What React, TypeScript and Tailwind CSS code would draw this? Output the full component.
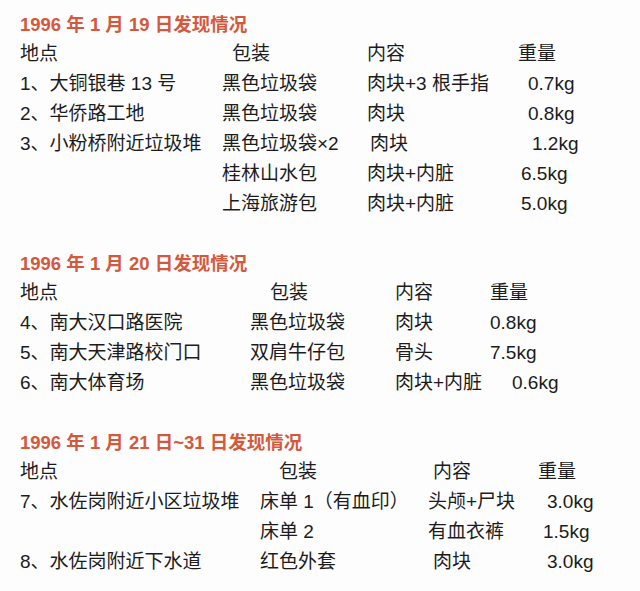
const font = { fontFamily: '"Liberation Sans", "Noto Sans CJK SC", sans-serif' };

function Title({ children }: { children: React.ReactNode }) {
  return (
    <h2 className="h-[28px] leading-[28px] text-[18.5px] font-bold text-[#d4593c]">{children}</h2>
  );
}

export default function App() {
  return (
    <div
      className="w-[640px] h-[591px] overflow-hidden bg-[#fdfdfe] pl-[20px] pt-[11px] text-[19px] leading-[30px] text-[#1c1c1c]"
      style={font}
    >
      {/* 1月19日 */}
      <section>
        <Title>1996 年 1 月 19 日发现情况</Title>
        <div className="grid grid-cols-[202px_145px_151px_1fr] whitespace-nowrap">
          <div>地点</div>
          <div className="pl-[10px]">包装</div>
          <div>内容</div>
          <div>重量</div>

          <div>1、大铜银巷 13 号</div>
          <div>黑色垃圾袋</div>
          <div>肉块+3 根手指</div>
          <div className="pl-[10px]">0.7kg</div>

          <div>2、华侨路工地</div>
          <div>黑色垃圾袋</div>
          <div>肉块</div>
          <div className="pl-[10px]">0.8kg</div>

          <div>3、小粉桥附近垃圾堆</div>
          <div>黑色垃圾袋×2</div>
          <div className="pl-[3px]">肉块</div>
          <div className="pl-[14px]">1.2kg</div>

          <div></div>
          <div>桂林山水包</div>
          <div>肉块+内脏</div>
          <div className="pl-[3px]">6.5kg</div>

          <div></div>
          <div>上海旅游包</div>
          <div>肉块+内脏</div>
          <div className="pl-[3px]">5.0kg</div>
        </div>
      </section>

      {/* 1月20日 */}
      <section className="mt-[31px]">
        <Title>1996 年 1 月 20 日发现情况</Title>
        <div className="grid grid-cols-[230px_145px_95px_1fr] whitespace-nowrap">
          <div>地点</div>
          <div className="pl-[20px]">包装</div>
          <div>内容</div>
          <div>重量</div>

          <div>4、南大汉口路医院</div>
          <div>黑色垃圾袋</div>
          <div>肉块</div>
          <div>0.8kg</div>

          <div>5、南大天津路校门口</div>
          <div>双肩牛仔包</div>
          <div>骨头</div>
          <div>7.5kg</div>

          <div>6、南大体育场</div>
          <div>黑色垃圾袋</div>
          <div>肉块+内脏</div>
          <div className="pl-[22px]">0.6kg</div>
        </div>
      </section>

      {/* 1月21日~31日 */}
      <section className="mt-[31px]">
        <Title>1996 年 1 月 21 日~31 日发现情况</Title>
        <div className="grid grid-cols-[240px_168px_110px_1fr] whitespace-nowrap">
          <div>地点</div>
          <div className="pl-[19px]">包装</div>
          <div className="pl-[5px]">内容</div>
          <div>重量</div>

          <div>7、水佐岗附近小区垃圾堆</div>
          <div>床单 1（有血印）</div>
          <div>头颅+尸块</div>
          <div className="pl-[9px]">3.0kg</div>

          <div></div>
          <div>床单 2</div>
          <div>有血衣裤</div>
          <div className="pl-[5px]">1.5kg</div>

          <div>8、水佐岗附近下水道</div>
          <div>红色外套</div>
          <div className="pl-[5px]">肉块</div>
          <div className="pl-[9px]">3.0kg</div>
        </div>
      </section>
    </div>
  );
}
